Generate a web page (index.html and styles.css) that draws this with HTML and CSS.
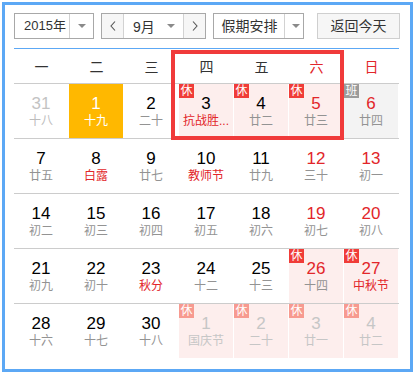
FILE: index.html
```html
<!DOCTYPE html>
<html lang="zh-CN">
<head>
<meta charset="utf-8">
<title>万年历</title>
<link rel="stylesheet" href="styles.css">
</head>
<body>
<div class="frame">
  <div class="toolbar">
    <div class="box year-box">
      <span class="box-text year-text">2015年</span>
      <span class="box-arrow year-arrow"><i class="tri"></i></span>
    </div>
    <div class="box month-box">
      <span class="nav-btn"><svg width="6" height="10" viewBox="0 0 6 10"><path d="M5 0.5 L1 5 L5 9.5" fill="none" stroke="#555" stroke-width="1.1"/></svg></span>
      <span class="month-mid"><span class="month-text">9月</span><i class="tri"></i></span>
      <span class="nav-btn next"><svg width="6" height="10" viewBox="0 0 6 10"><path d="M1 0.5 L5 5 L1 9.5" fill="none" stroke="#555" stroke-width="1.1"/></svg></span>
    </div>
    <div class="box holiday-box">
      <span class="box-text holiday-text">假期安排</span>
      <span class="box-arrow holiday-arrow"><i class="tri"></i></span>
    </div>
    <div class="today-btn">返回今天</div>
  </div>

  <div class="calendar">
    <div class="weekdays">
      <span>一</span><span>二</span><span>三</span><span>四</span><span>五</span><span class="red">六</span><span class="red">日</span>
    </div>

    <div class="week">
      <div class="cell other"><b class="num">31</b><span class="lunar">十八</span></div>
      <div class="cell today"><b class="num">1</b><span class="lunar">十九</span></div>
      <div class="cell"><b class="num">2</b><span class="lunar">二十</span></div>
      <div class="cell rest"><em class="tag">休</em><b class="num">3</b><span class="lunar red">抗战胜...</span></div>
      <div class="cell rest"><em class="tag">休</em><b class="num">4</b><span class="lunar">廿二</span></div>
      <div class="cell rest"><em class="tag">休</em><b class="num red">5</b><span class="lunar">廿三</span></div>
      <div class="cell work"><em class="tag gray">班</em><b class="num red">6</b><span class="lunar">廿四</span></div>
    </div>

    <div class="week">
      <div class="cell"><b class="num">7</b><span class="lunar">廿五</span></div>
      <div class="cell"><b class="num">8</b><span class="lunar red">白露</span></div>
      <div class="cell"><b class="num">9</b><span class="lunar">廿七</span></div>
      <div class="cell"><b class="num">10</b><span class="lunar red">教师节</span></div>
      <div class="cell"><b class="num">11</b><span class="lunar">廿九</span></div>
      <div class="cell"><b class="num red">12</b><span class="lunar">三十</span></div>
      <div class="cell"><b class="num red">13</b><span class="lunar">初一</span></div>
    </div>

    <div class="week">
      <div class="cell"><b class="num">14</b><span class="lunar">初二</span></div>
      <div class="cell"><b class="num">15</b><span class="lunar">初三</span></div>
      <div class="cell"><b class="num">16</b><span class="lunar">初四</span></div>
      <div class="cell"><b class="num">17</b><span class="lunar">初五</span></div>
      <div class="cell"><b class="num">18</b><span class="lunar">初六</span></div>
      <div class="cell"><b class="num red">19</b><span class="lunar">初七</span></div>
      <div class="cell"><b class="num red">20</b><span class="lunar">初八</span></div>
    </div>

    <div class="week">
      <div class="cell"><b class="num">21</b><span class="lunar">初九</span></div>
      <div class="cell"><b class="num">22</b><span class="lunar">初十</span></div>
      <div class="cell"><b class="num">23</b><span class="lunar red">秋分</span></div>
      <div class="cell"><b class="num">24</b><span class="lunar">十二</span></div>
      <div class="cell"><b class="num">25</b><span class="lunar">十三</span></div>
      <div class="cell rest"><em class="tag">休</em><b class="num red">26</b><span class="lunar">十四</span></div>
      <div class="cell rest"><em class="tag">休</em><b class="num red">27</b><span class="lunar red">中秋节</span></div>
    </div>

    <div class="week last">
      <div class="cell"><b class="num">28</b><span class="lunar">十六</span></div>
      <div class="cell"><b class="num">29</b><span class="lunar">十七</span></div>
      <div class="cell"><b class="num">30</b><span class="lunar">十八</span></div>
      <div class="cell rest next"><em class="tag light">休</em><b class="num">1</b><span class="lunar">国庆节</span></div>
      <div class="cell rest next"><em class="tag light">休</em><b class="num">2</b><span class="lunar">二十</span></div>
      <div class="cell rest next"><em class="tag light">休</em><b class="num">3</b><span class="lunar">廿一</span></div>
      <div class="cell rest next"><em class="tag light">休</em><b class="num">4</b><span class="lunar">廿二</span></div>
    </div>
  </div>

  <div class="highlight"></div>
</div>
</body>
</html>
```

FILE: styles.css
```css
* { box-sizing: border-box; }

body {
  margin: 0;
  background: #fff;
  font-family: "Liberation Sans", Arial, "Noto Sans CJK SC", sans-serif;
  color: #333;
}

.frame {
  position: relative;
  margin: 2px 0 0 2px;
  width: 411px;
  height: 370px;
  border: 3px solid #5ca8f5;
  padding: 8px 0 0 9px;
}

/* toolbar */
.toolbar {
  display: flex;
  height: 26px;
}

.box {
  display: flex;
  height: 26px;
  border: 1px solid #a8a8a8;
  background: #fff;
}

.box-text {
  display: flex;
  align-items: center;
  font-size: 14px;
  color: #333;
  line-height: 24px;
  white-space: nowrap;
}

.box-arrow {
  display: flex;
  align-items: center;
  justify-content: center;
  border-left: 1px solid #d2d2d2;
}

.tri {
  display: block;
  width: 0;
  height: 0;
  border-left: 4px solid transparent;
  border-right: 4px solid transparent;
  border-top: 4px solid #8a8a8a;
}

.year-box { width: 80px; }
.year-text { width: 54px; flex: none; padding-left: 9px; font-size: 13px; }
.year-text-cjk { font-size: 14px; }
.year-arrow { width: 24px; flex: none; }

.month-box { width: 105px; margin-left: 7px; }
.nav-btn {
  width: 22px;
  flex: none;
  display: flex;
  align-items: center;
  justify-content: center;
  background: #f6f6f6;
  border-right: 1px solid #d2d2d2;
}
.nav-btn.next { border-right: 0; border-left: 1px solid #d2d2d2; }
.month-mid {
  width: 59px;
  flex: none;
  display: flex;
  align-items: center;
  padding: 0 8px 0 9px;
}
.month-text { font-size: 14px; color: #333; flex: 1; white-space: nowrap; }

.holiday-box { width: 91px; margin-left: 7px; }
.holiday-text { width: 70px; flex: none; justify-content: center; padding-left: 1px; }
.holiday-arrow { width: 19px; flex: none; padding-left: 3px; }

.today-btn {
  width: 83px;
  height: 26px;
  margin-left: 13px;
  border: 1px solid #cfcfcf;
  background: #f6f6f6;
  font-size: 14px;
  line-height: 24px;
  text-align: center;
  color: #333;
  white-space: nowrap;
}

/* calendar */
.calendar {
  width: 385px;
  margin-top: 9px;
  border-top: 1px solid #5ca8f5;
}

.weekdays {
  display: grid;
  grid-template-columns: repeat(7, 55px);
  height: 35px;
  border-bottom: 1px solid #cccccc;
  align-items: center;
  text-align: center;
  font-size: 14px;
  color: #333;
  padding-bottom: 1px;
}

.week {
  display: grid;
  grid-template-columns: repeat(7, 55px);
  height: 55px;
  border-bottom: 1px solid #cccccc;
}
.week.last { border-bottom: 0; }

.cell {
  position: relative;
  width: 54px;
  height: 54px;
  display: flex;
  flex-direction: column;
  align-items: center;
  padding-top: 10px;
}

.num {
  font-weight: normal;
  font-size: 17px;
  line-height: 20px;
  color: #000;
}

.lunar {
  font-size: 12px;
  line-height: 15px;
  color: #939393;
  white-space: nowrap;
}

.red { color: #e2262a; }
.lunar.red { color: #e2262a; }
.num.red { color: #e2262a; }
.weekdays .red { color: #e2262a; }

.cell.other .num { color: #c3c3c3; }
.cell.other .lunar { color: #bdbdbd; }

.cell.today { background: #ffb800; }
.cell.today .num,
.cell.today .lunar { color: #fff; }

.cell.rest { background: #fdeeed; }
.cell.work { background: #f3f3f3; }

.cell.next .num { color: #c6c6c6; }
.cell.next .lunar { color: #c6c6c6; }

.tag {
  position: absolute;
  top: 0;
  left: 0;
  width: 15px;
  height: 14px;
  background: #f03c38;
  color: #fff;
  font-style: normal;
  font-size: 12px;
  line-height: 14px;
  text-align: center;
}
.tag.gray { background: #9b9b9b; }
.tag.light { background: #f79a90; }

/* red selection frame over Thu–Sat of first week */
.highlight {
  position: absolute;
  left: 166px;
  top: 45px;
  width: 173px;
  height: 90px;
  border: 4px solid #f03a3a;
  pointer-events: none;
}
```
